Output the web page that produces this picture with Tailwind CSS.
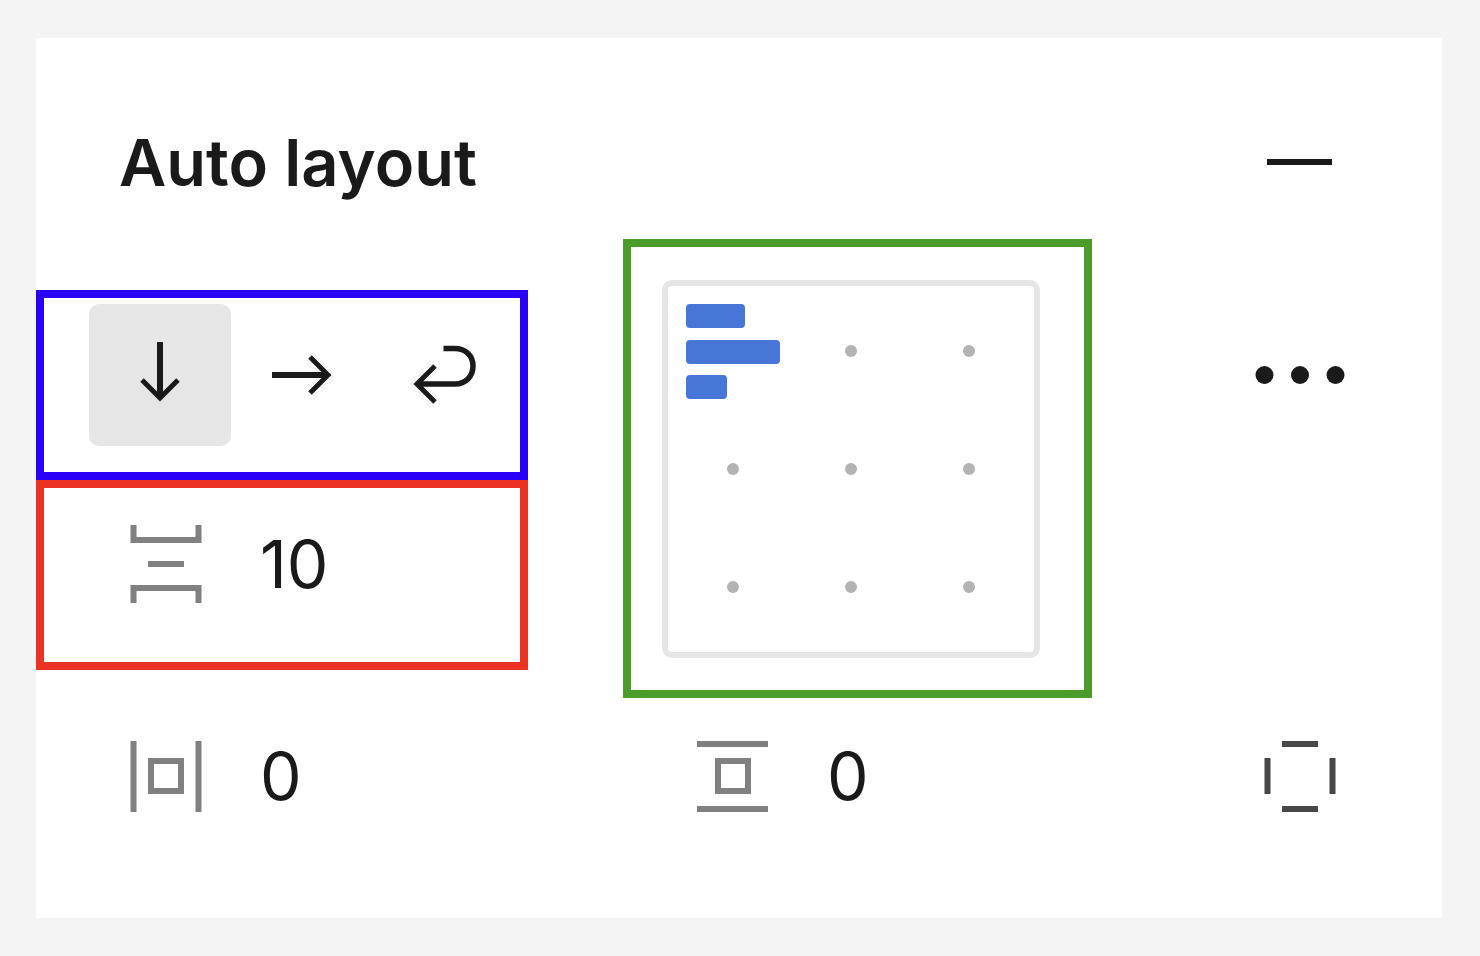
<!DOCTYPE html>
<html lang="en">
<head>
<meta charset="utf-8">
<meta name="viewport" content="width=device-width, initial-scale=1">
<title>Auto layout</title>
<script src="https://cdn.jsdelivr.net/npm/@tailwindcss/browser@4"></script>
</head>
<body class="flex min-h-screen bg-[#f4f4f4] py-[38px] pr-[38px] pl-9 font-['Inter',sans-serif] text-[#1a1a1a]">
<main class="flex-1 bg-white">
  <header class="flex h-[201px] items-center justify-between pt-12 pr-[71px] pl-[83px]">
    <h1 class="text-[65px] leading-[80px] font-semibold">Auto layout</h1>
    <button type="button" aria-label="Remove auto layout" class="flex size-[142px] items-center justify-center">
      <svg class="h-[8px] w-[66px]" viewBox="0 0 66 8" fill="#1a1a1a"><path d="M0 0h65v6H0z"/></svg>
    </button>
  </header>

  <section class="grid grid-cols-[1fr_511px_142px] gap-x-[95px] pr-[71px]">
    <div class="col-span-2 grid grid-cols-subgrid">
      <div class="pt-[51px]">
        <div role="group" aria-label="Direction" class="flex h-[190px] items-start border-8 border-[#2b00f7] pt-[6px] pl-[45px]">
          <button type="button" aria-label="Vertical" aria-pressed="true" class="flex size-[142px] items-center justify-center rounded-[10px] bg-[#e6e6e6]">
            <svg class="size-[72px]" viewBox="0 0 72 72" fill="none" stroke="#1a1a1a"><path stroke-width="6" d="M36 3v56"/><path stroke-width="5" d="M18 41l18 18 18-18"/></svg>
          </button>
          <button type="button" aria-label="Horizontal" aria-pressed="false" class="flex size-[142px] items-center justify-center">
            <svg class="size-[72px]" viewBox="0 0 72 72" fill="none" stroke="#1a1a1a"><path stroke-width="6" d="M6 36h56"/><path stroke-width="5" d="M44 18l18 18-18 18"/></svg>
          </button>
          <button type="button" aria-label="Wrap" aria-pressed="false" class="flex size-[142px] items-center justify-center">
            <svg class="size-[72px]" viewBox="0 0 72 72" fill="none" stroke="#1a1a1a"><path stroke-width="5.5" d="M35.500 9.500h11C58 9.500 65 17 65 27s-7 18-18 18H10"/><path stroke-width="5" d="M27 27L9 45l18 18"/></svg>
          </button>
        </div>
        <div class="flex h-[190px] items-center border-8 border-[#ea3323] pb-[22px] pl-[86px]">
          <label for="gap" aria-label="Vertical gap" class="mr-[58px] shrink-0">
            <svg class="h-[78px] w-[72px]" viewBox="0 0 72 78" fill="none" stroke="#808080" stroke-width="6"><path d="M3.500 0v15h65V0M18 39h36M3.500 78V63h65v15"/></svg>
          </label>
          <input id="gap" type="text" value="10" class="h-20 w-40 min-w-0 bg-transparent text-[66px] leading-[80px] outline-none">
        </div>
      </div>

      <div class="w-[469px] border-8 border-[#4b9c2a] pt-[33px] pb-8 pl-[31px]">
        <fieldset aria-label="Alignment" class="grid size-[378px] grid-cols-3 grid-rows-3 rounded-[10px] border-6 border-[#e6e6e6] p-[6px]">
          <label class="flex flex-col items-start justify-between px-3 pt-3 pb-[11px]">
            <input type="radio" name="align" aria-label="Top left" checked class="sr-only">
            <span class="h-[24px] w-[59px] rounded-[4px] bg-[#4876d8]"></span>
            <span class="h-[24px] w-[94px] rounded-[4px] bg-[#4876d8]"></span>
            <span class="h-[24px] w-[41px] rounded-[4px] bg-[#4876d8]"></span>
          </label>
          <input type="radio" name="align" aria-label="Top centre" class="size-3 appearance-none place-self-center rounded-full bg-[#b3b3b3]">
          <input type="radio" name="align" aria-label="Top right" class="size-3 appearance-none place-self-center rounded-full bg-[#b3b3b3]">
          <input type="radio" name="align" aria-label="Left" class="size-3 appearance-none place-self-center rounded-full bg-[#b3b3b3]">
          <input type="radio" name="align" aria-label="Centre" class="size-3 appearance-none place-self-center rounded-full bg-[#b3b3b3]">
          <input type="radio" name="align" aria-label="Right" class="size-3 appearance-none place-self-center rounded-full bg-[#b3b3b3]">
          <input type="radio" name="align" aria-label="Bottom left" class="size-3 appearance-none place-self-center rounded-full bg-[#b3b3b3]">
          <input type="radio" name="align" aria-label="Bottom centre" class="size-3 appearance-none place-self-center rounded-full bg-[#b3b3b3]">
          <input type="radio" name="align" aria-label="Bottom right" class="size-3 appearance-none place-self-center rounded-full bg-[#b3b3b3]">
        </fieldset>
      </div>
    </div>
    <button type="button" aria-label="Advanced settings" class="mt-[65px] flex size-[142px] items-center justify-center">
      <svg class="h-[18px] w-[90px]" viewBox="0 0 90 18" fill="#1a1a1a"><circle cx="9.500" cy="9" r="9"/><circle cx="45" cy="9" r="9"/><circle cx="80.500" cy="9" r="9"/></svg>
    </button>
  </section>

  <section class="grid grid-cols-[1fr_511px_142px] items-center gap-x-[95px] pt-[7px] pr-[71px] pb-[71px]">
    <div class="flex items-center pl-[94px]">
      <label for="padx" aria-label="Horizontal padding" class="mr-[58px] shrink-0">
        <svg class="size-[72px]" viewBox="0 0 72 72" fill="none" stroke="#808080" stroke-width="6"><path d="M3.500 1v71M68.500 1v71M21 21h30v30H21z"/></svg>
      </label>
      <input id="padx" type="text" value="0" class="h-20 w-40 min-w-0 bg-transparent text-[66px] leading-[80px] outline-none">
    </div>
    <div class="flex items-center pl-[74px]">
      <label for="pady" aria-label="Vertical padding" class="mr-[58px] shrink-0">
        <svg class="size-[72px]" viewBox="0 0 72 72" fill="none" stroke="#808080" stroke-width="6"><path d="M0 4h71M0 69h71M21 21h30v30H21z"/></svg>
      </label>
      <input id="pady" type="text" value="0" class="h-20 w-40 min-w-0 bg-transparent text-[66px] leading-[80px] outline-none">
    </div>
    <button type="button" aria-label="Individual padding" class="flex size-[142px] items-center justify-center">
      <svg class="size-[72px]" viewBox="0 0 72 72" fill="none" stroke="#474747" stroke-width="6"><path d="M18 4h36M18 69h36M3.500 18v36M68.500 18v36"/></svg>
    </button>
  </section>
</main>
</body>
</html>
